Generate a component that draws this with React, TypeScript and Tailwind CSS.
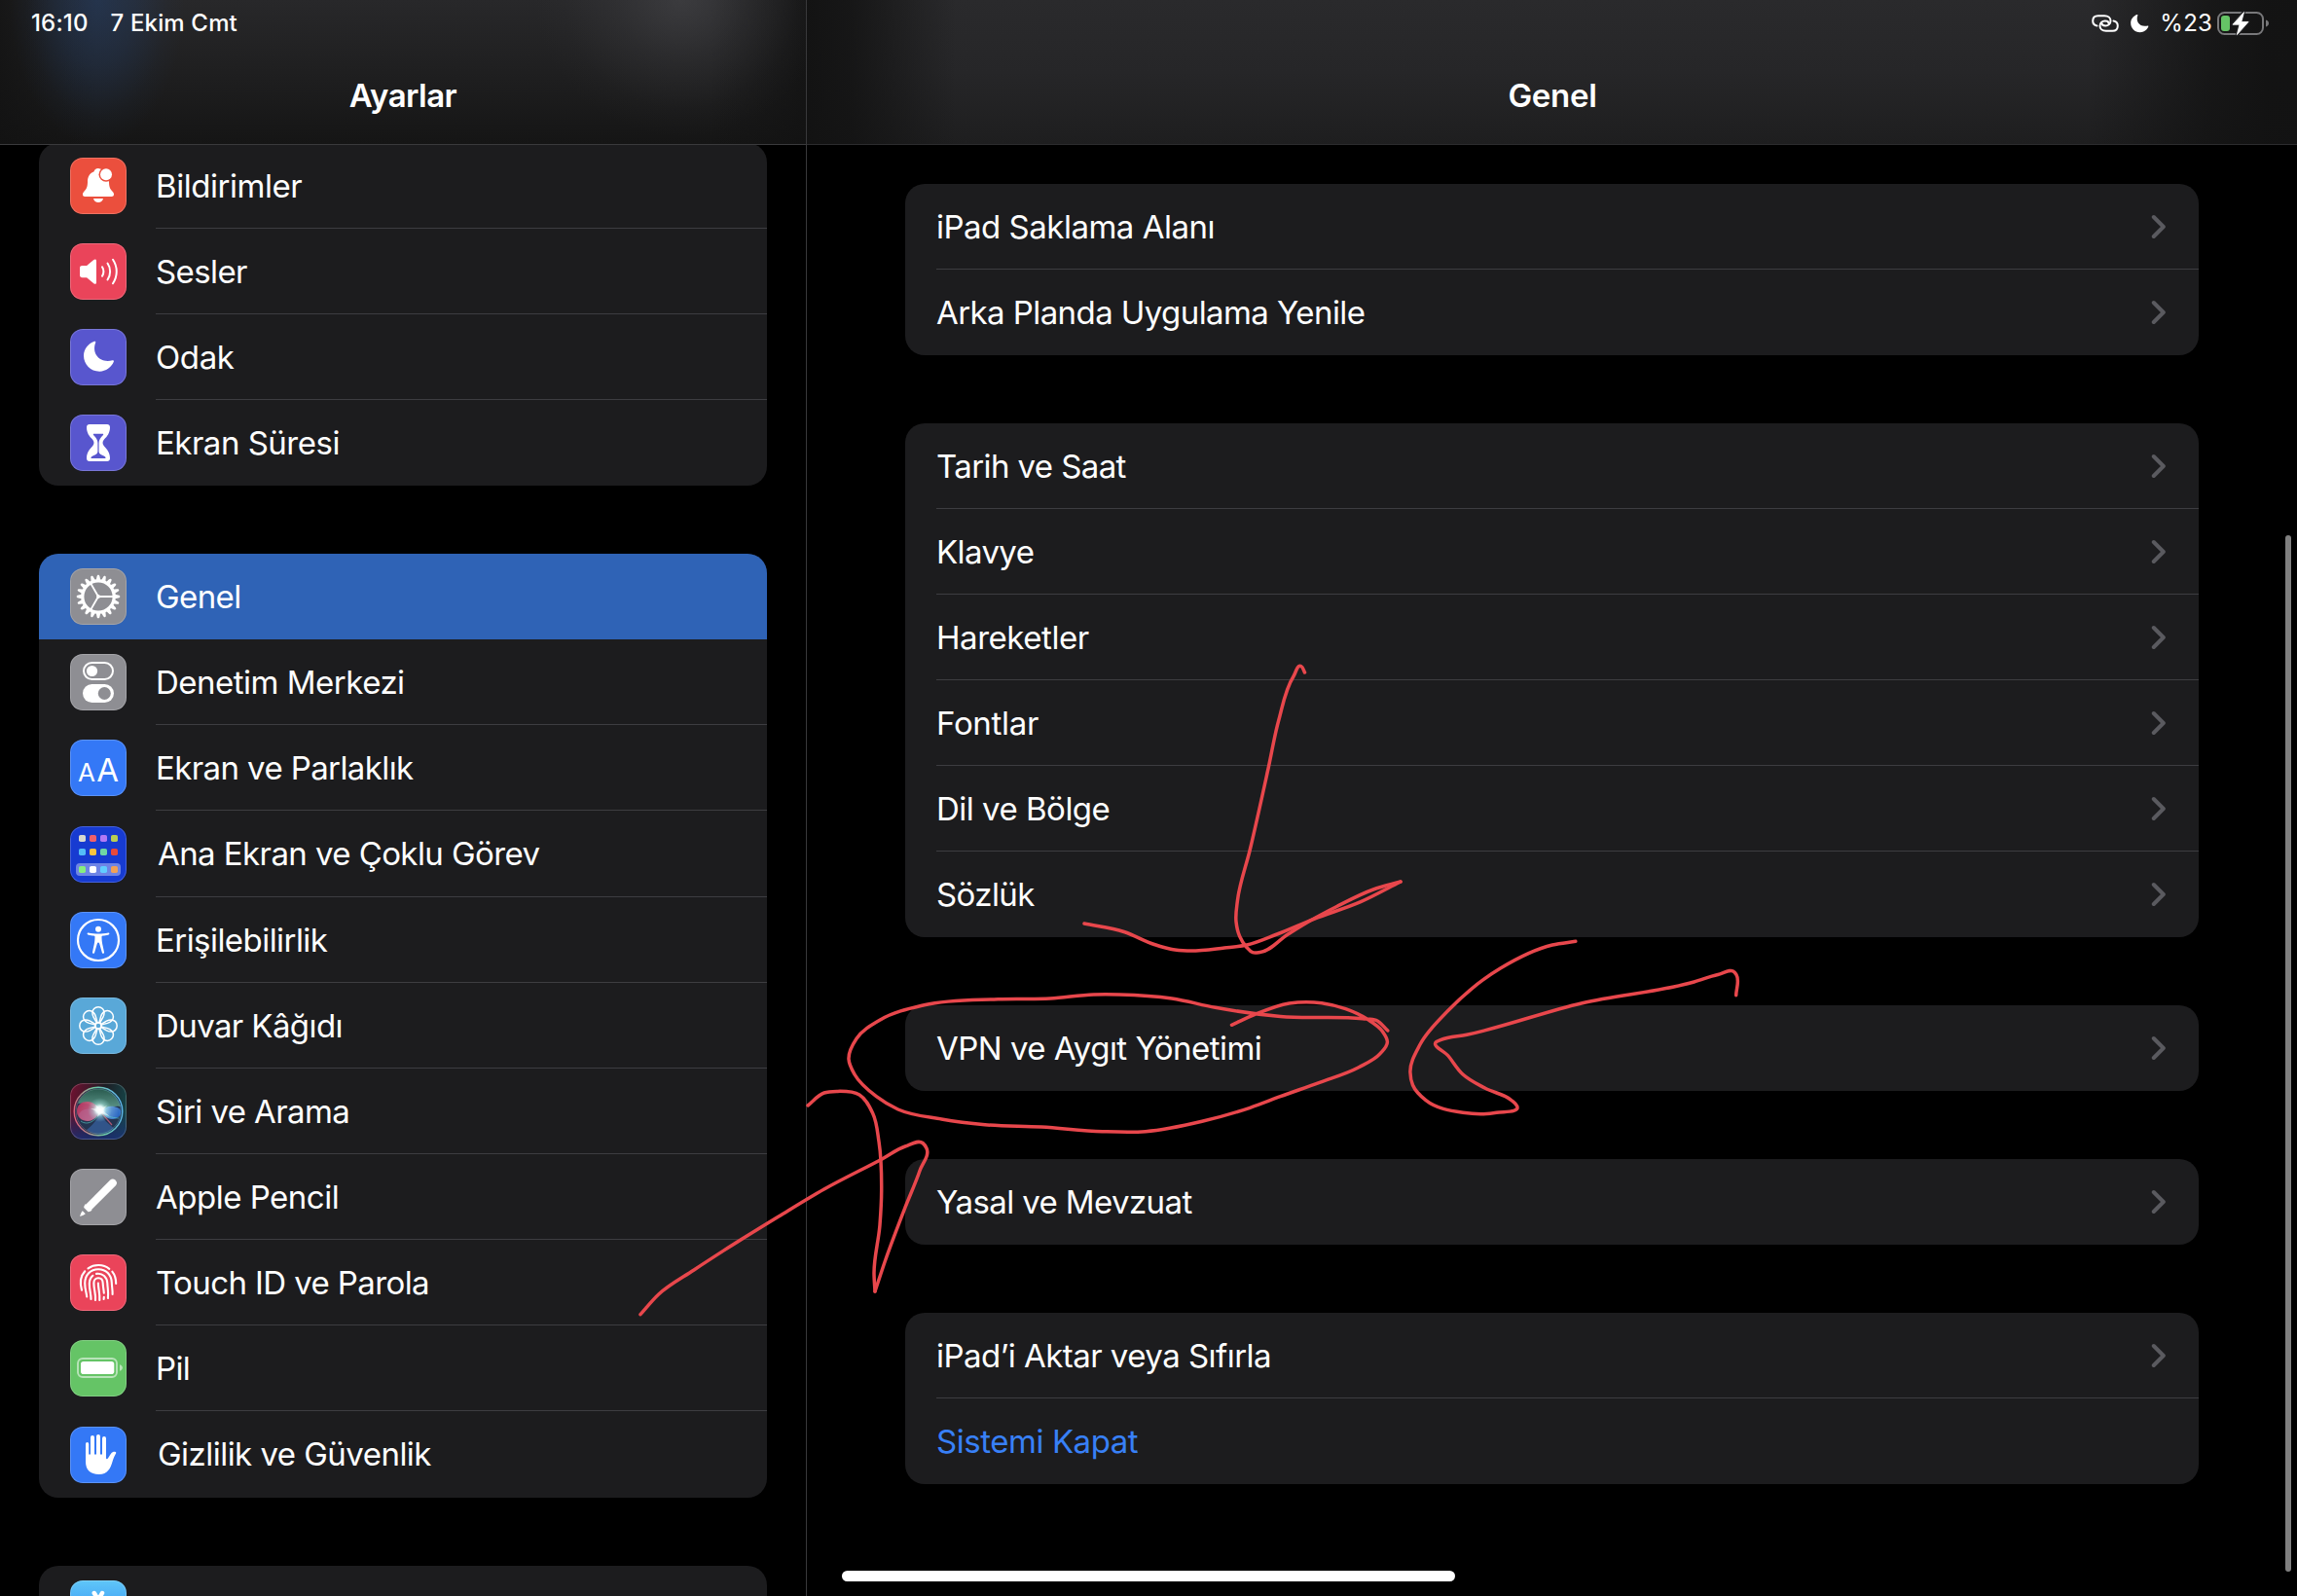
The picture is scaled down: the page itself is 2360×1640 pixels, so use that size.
import React from "react";

type Pt = [number, number];

/** Tangent direction at b, weighted toward the shorter neighbouring segment. */
function tangent(a: Pt, b: Pt, c: Pt): Pt {
  const l1 = Math.hypot(b[0] - a[0], b[1] - a[1]);
  const l2 = Math.hypot(c[0] - b[0], c[1] - b[1]);
  let x = 0;
  let y = 0;
  if (l1 > 0) {
    x += ((b[0] - a[0]) / l1) * (l2 || 1);
    y += ((b[1] - a[1]) / l1) * (l2 || 1);
  }
  if (l2 > 0) {
    x += ((c[0] - b[0]) / l2) * (l1 || 1);
    y += ((c[1] - b[1]) / l2) * (l1 || 1);
  }
  const l = Math.hypot(x, y) || 1;
  return [x / l, y / l];
}

/** Smooth cubic Bézier path through the points. */
function smooth(pts: Pt[]): string {
  let d = `M${pts[0][0]} ${pts[0][1]}`;
  for (let i = 0; i < pts.length - 1; i++) {
    const p0 = pts[Math.max(0, i - 1)];
    const p1 = pts[i];
    const p2 = pts[i + 1];
    const p3 = pts[Math.min(pts.length - 1, i + 2)];
    const k = Math.hypot(p2[0] - p1[0], p2[1] - p1[1]) / 3;
    const t1 = tangent(p0, p1, p2);
    const t2 = tangent(p1, p2, p3);
    d += `C${p1[0] + t1[0] * k} ${p1[1] + t1[1] * k} ${p2[0] - t2[0] * k} ${p2[1] - t2[1] * k} ${p2[0]} ${p2[1]}`;
  }
  return d;
}

const strokes: Pt[][] = [
  // downward arrow shaft and right barb
  [[1340.5, 691], [1336.7, 684.5], [1329, 695], [1313.8, 740], [1303.4, 788], [1284.3, 873], [1271.500, 925], [1270, 947], [1273.6, 962], [1280.5, 973], [1287, 978.7], [1294.6, 978.5], [1323.3, 960], [1348, 945], [1373, 931.7], [1411, 914], [1439, 906]],
  [[1439, 906], [1398, 926.7], [1350, 944.3], [1312, 960], [1281, 971], [1258, 974], [1220, 977], [1204, 975.5], [1186, 970.5], [1154.8, 957.500], [1114, 949]],
  // loop around the VPN row
  [[1265.5, 1053.3], [1288.8, 1042.7], [1324.5, 1031], [1358, 1030.7], [1382.5, 1036.7], [1404.8, 1047.3], [1420.5, 1060], [1425.4, 1070.7], [1418, 1082.7], [1396, 1096.7], [1355.7, 1112.3], [1315.5, 1126.7], [1284.3, 1138.3], [1235, 1152.3], [1177, 1162.7], [1132.5, 1162.7], [1070, 1158], [1012, 1155.7], [967.3, 1150], [922.7, 1140], [900.4, 1126.7], [878, 1104], [872, 1088.3], [880, 1067.3], [904.8, 1047.7], [949.5, 1032.7], [1025.4, 1026.7], [1079, 1026], [1123.6, 1022], [1150, 1022], [1204, 1026], [1248.6, 1035.3], [1315.5, 1044.5], [1400, 1046.7], [1413.8, 1048.3], [1425.8, 1059]],
  // arrow from the right
  [[1618.8, 967.3], [1595, 971], [1541.5, 995], [1488, 1038.3], [1459, 1073.3], [1448.9, 1101.7], [1451.5, 1115], [1465, 1130.7], [1503, 1143.3], [1537.6, 1143.3], [1558.7, 1136.7], [1553, 1130.7], [1526, 1118.3], [1503, 1104], [1488, 1085], [1475.6, 1070.7], [1480, 1068.7], [1507, 1063.3], [1625.7, 1030.7], [1740.5, 1009], [1765, 1001.500], [1782, 998.9], [1784, 1001.7], [1783.7, 1022.7]],
  // arrow from the lower left
  [[658, 1350.7], [676.7, 1330], [713, 1305], [743, 1285.4], [800, 1250], [846.7, 1222], [906.7, 1190.7], [930, 1178], [948, 1174.5], [952, 1180], [945, 1203], [930, 1240.7], [910, 1294], [899, 1327]],
  [[899, 1327], [898, 1308.6], [904, 1258.6], [905.7, 1223], [903, 1173], [896.7, 1144], [883, 1125], [860, 1121.4], [846.7, 1123], [830, 1136]],
];

function Glyph({ children }: { children: React.ReactNode }) {
  return (
    <svg viewBox="0 0 58 58" className="block size-[58px]" fill="none">
      {children}
    </svg>
  );
}

const Bell = () => (
  <Glyph>
    <path fill="#fff" d="M29 11c-2.6 0-4 1.300-4.400 3.300C20.500 15.800 18 19.500 18 24.500c0 5.500-1 7.500-4 10.800-1.700 1.900-1.300 4.700 1.200 4.700h27.600c2.500 0 2.900-2.800 1.200-4.700-3-3.300-4-5.300-4-10.800V14z" />
    <path fill="#fff" d="M24 42h10c-.6 2.500-2.500 4-5 4s-4.400-1.500-5-4z" />
    <circle cx="37" cy="17.300" r="7.500" fill="#eb4f3d" />
    <circle cx="37" cy="17.300" r="6" fill="#fff" />
  </Glyph>
);

const Speaker = () => (
  <Glyph>
    <path fill="#fff" d="M10 25.500c0-1.700.9-2.500 2.500-2.500h4.600l7.200-6c1.400-1.100 2.700-.5 2.700 1v22.300c0 1.600-1.400 2-2.700.9l-7.200-6h-4.600c-1.600 0-2.500-.9-2.500-2.500z" />
    <path stroke="#fff" strokeWidth="2" strokeLinecap="round" d="M33 24.300c1.700 2.800 1.700 6.600 0 9.400M38.500 20.500c3.500 5 3.500 12 0 17M44 16.800c5 7.500 5 17 0 24.500" />
  </Glyph>
);

const Moon = () => (
  <Glyph>
    <path fill="#fff" d="M25 12.700c.9-.3 1.600.4 1.200 1.300C22 25 30 35.500 43.500 32.300c1-.2 1.700.4 1.400 1.300C42.500 39.500 36.800 43.700 30.300 43.700 21.200 43.700 14 36.500 14 27.500 14 20.800 18.500 15 25 12.700z" />
  </Glyph>
);

const Hourglass = () => (
  <Glyph>
    <path
      fill="#fff"
      fillRule="evenodd"
      d="M20 10h18c1.800 0 3 1.200 3 3 0 6-3 9.500-6 12.500-2 2-2 5 0 7 3 3 6 6.500 6 12.500 0 1.800-1.200 3-3 3H20c-1.800 0-3-1.200-3-3 0-6 3-9.500 6-12.500 2-2 2-5 0-7-3-3-6-6.500-6-12.500 0-1.800 1.200-3 3-3zM24.500 19.800c-.7 0-.9.6-.5 1.100 2.800 3 4.400 5 4.400 8.100v8.500c0 1.800-.7 2.800-2.400 3.700l-3.200 1.600c-1 .5-1.300 1-1.300 2.200h15c0-1.200-.3-1.700-1.300-2.200L32 41.200c-1.700-.9-2.400-1.900-2.400-3.700V29c0-3.100 1.600-5.100 4.400-8.100.4-.5.2-1.100-.5-1.100z"
    />
  </Glyph>
);

const teeth = Array.from({ length: 20 }, (_, i) => i * 18);

const Gear = () => (
  <Glyph>
    <circle cx="29" cy="29" r="16.200" stroke="#fff" strokeWidth="3.200" />
    {teeth.map((a) => (
      <path key={a} transform={`rotate(${a} 29 29)`} fill="#fff" d="M45 26.600l4.400.9c1.500.3 1.900.8 1.900 1.500s-.4 1.200-1.900 1.500l-4.400.9z" />
    ))}
    <path stroke="#fff" strokeWidth="1.900" d="M29 29H45M29 29L21 15.100M29 29L21 42.900" />
    <circle cx="29" cy="29" r="1.900" fill="#fff" />
  </Glyph>
);

const Toggles = () => (
  <Glyph>
    <rect x="14" y="9" width="30" height="17" rx="8.500" stroke="#fff" strokeWidth="2" />
    <circle cx="22.500" cy="17.500" r="5.600" fill="#fff" />
    <rect x="13" y="31" width="32" height="19" rx="9.500" fill="#fff" />
    <circle cx="35.300" cy="40.500" r="6.500" fill="#8e8e93" />
  </Glyph>
);

const LetterSizes = () => (
  <div className="flex size-[58px] items-baseline justify-center gap-[1.5px] pt-[7px] leading-[48px] font-normal text-white">
    <span className="text-[26px]">A</span>
    <span className="text-[33px]">A</span>
  </div>
);

const HomeGrid = () => {
  const rows: [number, string[]][] = [
    [9, ["#d8d8d0", "#f0606a", "#b179f5", "#b9cf52"]],
    [23, ["#54bdf7", "#f9c440", "#70d5a4", "#e6493a"]],
    [41, ["#87ee7f", "#ffffff", "#61ccff", "#f2a155"]],
  ];
  return (
    <Glyph>
      <rect x="6" y="38" width="46" height="13" rx="4" fill="#6e84e6" />
      {rows.map(([y, cs]) => cs.map((c, i) => <rect key={`${y}-${i}`} x={9 + i * 11} y={y} width="7" height="7" rx="1.800" fill={c} />))}
    </Glyph>
  );
};

const Accessibility = () => (
  <Glyph>
    <circle cx="29" cy="29" r="21" stroke="#fff" strokeWidth="2.200" />
    <circle cx="29" cy="17.800" r="3" fill="#fff" />
    <path
      fill="#fff"
      d="M18.800 21.500c3 .7 6.700 1.100 10.200 1.100s7.200-.4 10.200-1.100c1.300-.3 1.700 1.600.4 1.900-2.400.6-4.400.9-5.900 1.100-1 .1-1.200.5-1.200 1.300 0 2.800.3 5.600.8 7.700.6 2.700 1.200 5.400 1.700 7.900.3 1.500-1.700 2-2.100.5l-2.700-9.100c-.5-1.600-1.900-1.600-2.400 0l-2.700 9.100c-.4 1.500-2.400 1-2.100-.5.500-2.500 1.100-5.200 1.700-7.900.5-2.100.8-4.900.8-7.700 0-.8-.2-1.200-1.200-1.300-1.500-.2-3.500-.5-5.900-1.100-1.300-.3-.9-2.200.4-1.900z"
    />
  </Glyph>
);

const petals = Array.from({ length: 8 }, (_, i) => i * 45);

const Flower = () => (
  <Glyph>
    {petals.map((a) => (
      <path key={a} transform={`rotate(${a} 29 29)`} stroke="#fff" strokeWidth="1.500" d="M29 9.800c3.500 0 6.100 2.600 6.100 6 0 1.700-.5 3.200-1.300 4.700L30.600 26h-3.200l-3.200-5.500c-.8-1.500-1.300-3-1.300-4.700 0-3.400 2.600-6 6.100-6z" />
    ))}
    <circle cx="29" cy="29" r="3.200" stroke="#fff" strokeWidth="1.400" />
  </Glyph>
);

const Siri = () => (
  <Glyph>
    <defs>
      <linearGradient id="siri-l" x1="0" x2="1" y1="0.300" y2="0.500">
        <stop offset="0" stopColor="#6b1230" />
        <stop offset="0.550" stopColor="#1d1d24" />
        <stop offset="1" stopColor="#15474a" />
      </linearGradient>
      <linearGradient id="siri-b" x1="0" x2="0" y1="0" y2="1">
        <stop offset="0.500" stopColor="#1b2a6b" stopOpacity="0" />
        <stop offset="1" stopColor="#1b2f78" stopOpacity="0.850" />
      </linearGradient>
      <linearGradient id="siri-r" x1="0" x2="1" y1="0.600" y2="0.400">
        <stop offset="0" stopColor="#e0607c" />
        <stop offset="0.500" stopColor="#6fc9a0" />
        <stop offset="1" stopColor="#5fb6f0" />
      </linearGradient>
      <radialGradient id="siri-glow">
        <stop offset="0" stopColor="#fff" />
        <stop offset="0.300" stopColor="#f0ffff" stopOpacity="0.950" />
        <stop offset="0.550" stopColor="#b8f0ec" stopOpacity="0.450" />
        <stop offset="1" stopColor="#8fe0e0" stopOpacity="0" />
      </radialGradient>
      <linearGradient id="siri-top" x1="0" x2="0" y1="0" y2="1">
        <stop offset="0" stopColor="#2a5f4f" />
        <stop offset="1" stopColor="#6aa896" />
      </linearGradient>
      <linearGradient id="siri-pink" x1="0" x2="1" y1="0" y2="0.400">
        <stop offset="0" stopColor="#c92d5a" />
        <stop offset="1" stopColor="#dd7fa0" />
      </linearGradient>
      <linearGradient id="siri-blue" x1="0" x2="1" y1="0" y2="0.300">
        <stop offset="0" stopColor="#a8d8f5" />
        <stop offset="1" stopColor="#2d6fd0" />
      </linearGradient>
    </defs>
    <rect width="58" height="58" fill="url(#siri-l)" />
    <rect width="58" height="58" fill="url(#siri-b)" />
    <circle cx="29" cy="29" r="24" fill="#243450" />
    <path fill="url(#siri-top)" d="M8 21C12 10 21 6 30 6s18 5 22 18c-6-1-13 1-21 5C23 22 16 19 8 21z" opacity="0.900" />
    <path fill="url(#siri-pink)" d="M7 29c0-7 5-10 11-10 6 0 10 5 14 9-4 6-8 11-14 11S7 35 7 29z" opacity="0.850" />
    <path fill="#b56a98" d="M9 32c3-6 12-7 22-3-4 6-8 10-13 9.500C13 38 9 36 9 32z" opacity="0.500" />
    <path fill="url(#siri-blue)" d="M31 29c5-5 10-6 14-5 5 1 8 3 7 7s-5 6-9 6c-5 0-8-4-12-8z" opacity="0.900" />
    <path fill="#3d6fb8" d="M31 30c-3 8-9 14-14 18 8 7 22 6 28-2-6-4-11-9-14-16z" opacity="0.550" />
    <path stroke="#5bd0c8" strokeWidth="1" d="M11 39c7 5 15 0 20-9 5 3 12 6 19 6" opacity="0.600" />
    <path stroke="#d0607c" strokeWidth="1.200" d="M31 29l12 14" opacity="0.800" />
    <circle cx="30.500" cy="27.500" r="12.500" fill="url(#siri-glow)" />
    <path fill="#fff" d="M26 22l5 4 7-3-4.500 5 7 6-8.500-3-4 4 1-5-8-4 7 .5z" opacity="0.550" />
    <circle cx="29" cy="29" r="24.800" stroke="url(#siri-r)" strokeWidth="1.400" />
    <circle cx="29" cy="29" r="23" stroke="url(#siri-r)" strokeWidth="0.600" opacity="0.600" />
  </Glyph>
);

const Pencil = () => (
  <Glyph>
    <path stroke="#fff" strokeWidth="8" strokeLinecap="round" d="M43.800 14.700L20 38.500" />
    <path fill="#fff" d="M16 36l6.500 6.500c-1.500 1.500-3.500 2.200-5 1.400l-3-3c-.8-1.500 0-3.400 1.500-4.900z" />
    <path fill="#8e8e93" d="M12 41.500l2.500-1.200 4 4-1.200 2.400z" />
    <path fill="#fff" d="M12.800 43.200l3 3c-1.200 1.200-3.400 2-5 2.600-.4.200-.8-.1-.6-.6.700-1.700 1.400-3.800 2.600-5z" />
  </Glyph>
);

const Fingerprint = () => (
  <Glyph>
    <g stroke="#fff" strokeWidth="2.100" strokeLinecap="round">
      <path d="M18.500 14.300C25 9.800 34 9.900 40.300 14.800" />
      <path d="M15.200 17.300C11 22 9.800 29 12 36.700" />
      <path d="M43.300 17.700C46 21 47.200 25 47.200 30" />
      <path d="M17.200 43.500C16.800 39 15.200 36 15.200 29.500 15.200 21 21 15.200 29 15.200c8 0 13.500 5.800 13.800 13.800.1 4.500 1 7.500.8 12" />
      <path d="M21.500 46C21.500 40 19.800 36.500 19.800 30c0-3.500 1.300-6.200 3.600-8.200" />
      <path d="M27 19.900c6.500-1 11 3.600 11.300 9.600.2 5.500 1.400 9 .6 15.500" />
      <path d="M26 47C26.500 40 24.400 36 24.400 29.500c0-3 1.900-5.200 4.600-5.200 2.800 0 4.600 2.200 4.700 5.200.1 4 .9 6.500 1.100 10.300" />
      <path d="M34.800 43.800l-.2 2.200" />
      <path d="M28.900 29.500c0 6 1.900 10 1.400 17.500" />
    </g>
  </Glyph>
);

const Battery = () => (
  <Glyph>
    <rect x="8" y="19" width="40" height="19" rx="5" stroke="#fff" strokeOpacity="0.550" strokeWidth="1.900" />
    <rect x="11" y="21.900" width="34.300" height="13.200" rx="2.800" fill="#fff" />
    <path fill="#fff" fillOpacity="0.550" d="M51 25.200c1.700.5 2.900 1.800 2.900 3.300s-1.200 2.800-2.900 3.300z" />
  </Glyph>
);

const Hand = () => (
  <Glyph>
    <path stroke="#fff" strokeWidth="3.200" strokeLinecap="round" d="M17.600 17.700V34" />
    <path stroke="#fff" strokeWidth="4" strokeLinecap="round" d="M23 11V34M29 10V34M35 12V34" />
    <path fill="#fff" d="M16 28.500h21v3.700c0 1.300 1.200 1.500 1.900.4 1.100-1.900 2.200-3.700 3.100-4.900 1.300-1.600 3.300-2.200 4.700-1.600.6.300.7.800.4 1.400-1.500 2.400-2.700 5.400-3.600 8.600C41.500 43.200 38.500 49 29.800 49 20.500 49 16 44 16 36z" />
  </Glyph>
);

const AppMark = () => (
  <Glyph>
    <path stroke="#fff" strokeWidth="4.500" strokeLinecap="round" d="M24.800 13l2.700 4.500M33 13L20 36M29 19l12 21M14 36h30" />
  </Glyph>
);

interface SideItem {
  label: string;
  icon: React.ReactNode;
  bg: string;
  row?: string;
  text?: string;
}

const group1: SideItem[] = [
  { label: "Bildirimler", icon: <Bell />, bg: "bg-[#eb4f3d]", text: "pt-[2px] tracking-[-0.45px]" },
  { label: "Sesler", icon: <Speaker />, bg: "bg-[#ea445a]" },
  { label: "Odak", icon: <Moon />, bg: "bg-[#5856ce]", text: "pt-[2px] tracking-[-0.4px]" },
  { label: "Ekran Süresi", icon: <Hourglass />, bg: "bg-[#5856ce]", text: "pt-[2px] tracking-[-0.5px]" },
];

const group2: SideItem[] = [
  { label: "Genel", icon: <Gear />, bg: "bg-[#8e8e93]", row: "h-[88px] bg-[#2f63b6]" },
  { label: "Denetim Merkezi", icon: <Toggles />, bg: "bg-[#8e8e93]", text: "pt-[2px] tracking-[-0.5px]" },
  { label: "Ekran ve Parlaklık", icon: <LetterSizes />, bg: "bg-[#3478f6]" },
  { label: "Ana Ekran ve Çoklu Görev", icon: <HomeGrid />, bg: "bg-[#173bd1]", row: "h-[89px] pt-px", text: "pl-0.5 tracking-[-0.58px]" },
  { label: "Erişilebilirlik", icon: <Accessibility />, bg: "bg-[#3478f6]", text: "pt-[2px] tracking-[-0.55px]" },
  { label: "Duvar Kâğıdı", icon: <Flower />, bg: "bg-[#59a8d8]" },
  { label: "Siri ve Arama", icon: <Siri />, bg: "bg-[#1d1d24]" },
  { label: "Apple Pencil", icon: <Pencil />, bg: "bg-[#8e8e93]", text: "pt-[2px] tracking-[-0.5px]" },
  { label: "Touch ID ve Parola", icon: <Fingerprint />, bg: "bg-[#ea445a]" },
  { label: "Pil", icon: <Battery />, bg: "bg-[#65c466]" },
  { label: "Gizlilik ve Güvenlik", icon: <Hand />, bg: "bg-[#3478f6]", row: "h-[89px] pt-px", text: "pl-0.5 tracking-[-0.53px]" },
];

function SideRow({ item, line }: { item: SideItem; line: boolean }) {
  return (
    <div className={`flex pl-8 ${item.row ?? "h-[88px]"}`}>
      <div className="flex w-[88px] items-center">
        <div className={`relative size-[58px] overflow-hidden rounded-[13px] ${item.bg}`}>
          {item.icon}
          <div className="absolute inset-0 rounded-[13px] shadow-[inset_0_0_0_1px_rgba(255,255,255,0.2)]" />
        </div>
      </div>
      <div className={`flex flex-1 items-center border-b text-[33px] ${line ? "border-[#3d3d41]" : "border-transparent"}`}>
        <span className={`whitespace-pre ${item.text ?? "pt-[2px] tracking-[-0.6px]"}`}>{item.label}</span>
      </div>
    </div>
  );
}

function Chevron() {
  return (
    <svg viewBox="0 0 16 26" className="mr-[33px] h-[26px] w-4" fill="none">
      <path d="M2.800 3l10 10-10 10" stroke="#5a5a5f" strokeWidth="4" strokeLinecap="round" strokeLinejoin="round" />
    </svg>
  );
}

interface Row {
  label: string;
  text?: string;
  action?: boolean;
}

const rightGroups: Row[][] = [
  [{ label: "iPad Saklama Alanı", text: "tracking-[-0.5px]" }, { label: "Arka Planda Uygulama Yenile", text: "tracking-[-0.58px]" }],
  [
    { label: "Tarih ve Saat" },
    { label: "Klavye" },
    { label: "Hareketler", text: "tracking-[-0.45px]" },
    { label: "Fontlar", text: "tracking-[-0.3px]" },
    { label: "Dil ve Bölge", text: "tracking-[-0.5px]" },
    { label: "Sözlük" },
  ],
  [{ label: "VPN ve Aygıt Yönetimi", text: "tracking-[-0.52px]" }],
  [{ label: "Yasal ve Mevzuat" }],
  [{ label: "iPad’i Aktar veya Sıfırla", text: "tracking-[-0.53px]" }, { label: "Sistemi Kapat", text: "tracking-[-0.45px]", action: true }],
];

function RightGroup({ rows }: { rows: Row[] }) {
  return (
    <section className="overflow-hidden rounded-[20px] bg-[#1c1c1e] pl-8">
      {rows.map((row, i) => (
        <div key={row.label} className={`flex h-[88px] items-center justify-between border-b text-[33px] ${i < rows.length - 1 ? "border-[#3d3d41]" : "border-transparent"}`}>
          <span className={`pt-[2px] ${row.text ?? "tracking-[-0.6px]"} ${row.action ? "text-[#3880f7]" : ""}`}>{row.label}</span>
          {!row.action && <Chevron />}
        </div>
      ))}
    </section>
  );
}

function StatusIcons() {
  return (
    <div className="flex h-[47px] items-center justify-end pr-[29px]">
      <svg viewBox="0 0 28 18" className="h-[18px] w-[28px]" fill="none" stroke="#fff" strokeWidth="2" strokeLinecap="round">
        <path d="M5.500 11.500C2.800 11 1.200 9.200 1.200 6.600c0-3.100 2-5.300 5.400-5.300h6.600c4 0 6.300 2.200 6.300 5 0 3.200-2.400 5.200-5.200 5.200-2.400 0-3.800-1-3.800-2.400" />
        <path d="M22.500 6.500c2.700.5 4.300 2.300 4.300 4.900 0 3.100-2 5.300-5.400 5.300h-6.600c-4 0-6.300-2.200-6.300-5 0-3.200 2.400-5.200 5.200-5.200 2.400 0 3.800 1 3.800 2.400" />
      </svg>
      <svg viewBox="12 11 34 34" className="ml-[11px] size-[20px]">
        <path fill="#fff" d="M25 12.700c.9-.3 1.600.4 1.200 1.300C22 25 30 35.500 43.500 32.300c1-.2 1.700.4 1.400 1.300C42.500 39.500 36.800 43.700 30.300 43.700 21.200 43.700 14 36.500 14 27.500 14 20.800 18.500 15 25 12.700z" />
      </svg>
      <span className="ml-[11px] text-[24px] tracking-[0.2px]">%23</span>
      <svg viewBox="0 0 54 26" className="ml-1 h-[26px] w-[54px]" fill="none">
        <rect x="2" y="2" width="46" height="22" rx="6.500" stroke="#78787a" strokeWidth="2" />
        <path fill="#78787a" d="M51 9.500c1.800.6 3 1.900 3 3.500s-1.200 2.900-3 3.500z" />
        <rect x="5" y="5" width="9" height="16" rx="3" fill="#65c466" />
        <path d="M28.500 1L17 14h7l-2.700 11L33 11.500h-7.200z" fill="#fff" stroke="#222224" strokeWidth="3" strokeLinejoin="round" />
        <path d="M28.500 1.500L17 14.200h7l-2.700 10.500L33 11.500h-7.200z" fill="#fff" stroke="#fff" strokeWidth="0.800" strokeLinejoin="round" />
      </svg>
    </div>
  );
}

export default function App() {
  return (
    <div className="relative flex h-[1640px] w-[2360px] overflow-hidden bg-black font-['Inter','Liberation_Sans',sans-serif] text-white">
      <aside className="flex w-[829px] flex-col overflow-hidden border-r border-[#38383a]">
        <header className="relative z-10 h-[149px] shrink-0 border-b border-[#3a3a3c] bg-[radial-gradient(ellipse_90px_150px_at_100px_0px,rgba(34,62,105,0.55),rgba(34,62,105,0.32)_45%,rgba(34,62,105,0.08)_80%,transparent),radial-gradient(ellipse_150px_140px_at_700px_0px,rgba(78,78,82,0.5),rgba(70,70,74,0.25)_45%,rgba(70,70,74,0.05)_80%,transparent),linear-gradient(to_right,rgba(18,18,18,0.8),transparent_12%,transparent_88%,rgba(18,18,18,0.8)),linear-gradient(to_bottom,#28282a,#1f1f20_50%,#151515)]">
          <div className="flex h-[47px] items-center gap-[23px] pl-8 text-[24px] font-medium tracking-[0.15px]">
            <span>16:10</span>
            <span>7 Ekim Cmt</span>
          </div>
          <h1 className="mt-[29px] text-center text-[33px] leading-[44px] font-semibold tracking-[-0.55px]">Ayarlar</h1>
        </header>
        <nav className="-mt-[2px] flex flex-col gap-[70px] pr-10 pl-10">
          <section className="overflow-hidden rounded-[20px] bg-[#1c1c1e]">
            {group1.map((item, i) => (
              <SideRow key={item.label} item={item} line={i < group1.length - 1} />
            ))}
          </section>
          <section className="overflow-hidden rounded-[20px] bg-[#1c1c1e]">
            {group2.map((item, i) => (
              <SideRow key={item.label} item={item} line={i > 0 && i < group2.length - 1} />
            ))}
          </section>
          <section className="overflow-hidden rounded-[20px] bg-[#1c1c1e]">
            <SideRow item={{ label: "", icon: <AppMark />, bg: "bg-linear-to-b from-[#5fc6f8] to-[#2b7af0]" }} line={false} />
          </section>
        </nav>
      </aside>

      <main className="flex w-[1531px] flex-col">
        <header className="h-[149px] shrink-0 border-b border-[#2c2c2e] bg-[linear-gradient(to_right,rgba(18,18,18,0.95),rgba(18,18,18,0.8)_3%,transparent_10%,transparent_86%,rgba(18,18,18,0.75)_94%,rgba(18,18,18,0.95)_98%),linear-gradient(to_bottom,#2a2a2c,#262628_50%,#1e1e1f)]">
          <StatusIcons />
          <h1 className="mt-[29px] pl-px text-center text-[33px] leading-[44px] font-semibold tracking-[-0.3px]">Genel</h1>
        </header>
        <div className="flex flex-col gap-[70px] pt-10 pr-[101px] pl-[101px]">
          {rightGroups.map((rows) => (
            <RightGroup key={rows[0].label} rows={rows} />
          ))}
        </div>
        <div className="mt-[89px] ml-9 h-[11px] w-[630px] shrink-0 rounded-full bg-white" />
      </main>

      <div className="absolute top-[550px] right-[6px] h-[1065px] w-[6px] rounded-full bg-[#808080]" />

      <svg viewBox="0 0 2360 1640" className="pointer-events-none absolute inset-0 z-20 h-full w-full" fill="none" stroke="#e8474c" strokeWidth="3.500" strokeLinecap="round" strokeLinejoin="round">
        {strokes.map((pts, i) => (
          <path key={i} d={smooth(pts)} />
        ))}
      </svg>
    </div>
  );
}
